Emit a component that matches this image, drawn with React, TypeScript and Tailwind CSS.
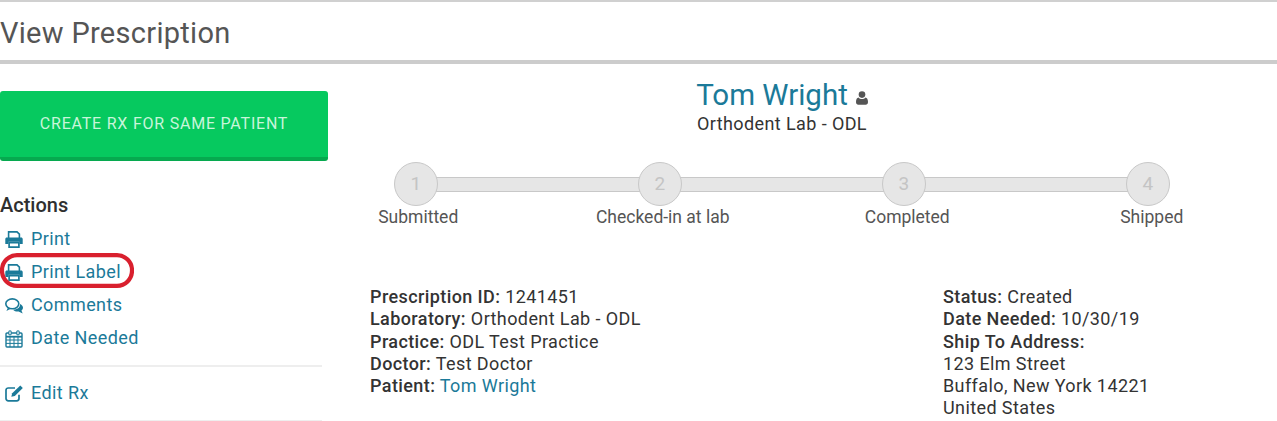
import React from 'react';

const PrintIcon = () => (
  <svg viewBox="0 0 18 17" className="h-[17px] w-[18px]" fill="none">
    <path d="M3.600 8V.9h8.400L14.400 3.200V8" stroke="currentColor" strokeWidth="1.600" />
    <path d="M1.800 6.600h14.400c.8 0 1.500.7 1.500 1.500v5h-3.200v-2.300H3.500v2.300H.3v-5c0-.8.7-1.500 1.500-1.500z" fill="currentColor" />
    <path d="M4.100 11.600h9.800v4.500H4.100z" stroke="currentColor" strokeWidth="1.700" />
  </svg>
);

const CommentsIcon = () => (
  <svg viewBox="0 0 18 16" className="h-[16px] w-[18px]" fill="none">
    <ellipse cx="7.300" cy="5.800" rx="6.500" ry="4.900" stroke="currentColor" strokeWidth="1.600" />
    <path d="M3 9.500 1.400 13 6.200 10.600z" fill="currentColor" />
    <path d="M15 6c2 .9 3 2.300 3 3.800 0 1.100-.6 2.100-1.600 2.800l1.300 2.900-4.100-2c-2.100.2-4.300-.4-5.600-1.800 3.800.1 7.400-2 7-5.700z" fill="currentColor" />
  </svg>
);

const CalendarIcon = () => (
  <svg viewBox="0 0 18 18" className="h-[18px] w-[18px]" fill="none" stroke="currentColor">
    <rect x="1" y="3" width="16" height="14" rx="1" strokeWidth="1.400" />
    <path d="M1 6.700h16" strokeWidth="1.800" />
    <path d="M1 10h16M1 13.400h16M5 6.700V17M9 6.700V17M13 6.700V17" strokeWidth="1" />
    <rect x="3.800" y="0.700" width="2.400" height="4.300" rx="1.200" fill="white" strokeWidth="1.100" />
    <rect x="11.800" y="0.700" width="2.400" height="4.300" rx="1.200" fill="white" strokeWidth="1.100" />
  </svg>
);

const EditIcon = () => (
  <svg viewBox="0 0 18 17" className="h-[17px] w-[18px]" fill="none">
    <path d="M14 9.800v3.700c0 1.300-1 2.300-2.300 2.300H3.300C2 15.800 1 14.800 1 13.500V5.300C1 4 2 3 3.300 3H10" stroke="currentColor" strokeWidth="1.700" />
    <path d="M15.300.4l2.500 2.500-8 8-3.500.9.900-3.500z" fill="currentColor" />
  </svg>
);

const UserIcon = () => (
  <svg viewBox="0 0 12 14" className="h-[14px] w-[12px]" fill="currentColor">
    <circle cx="6" cy="3.600" r="3.300" />
    <path d="M2.500 6.400C3.400 7.400 4.600 8 6 8s2.600-.6 3.500-1.600c1.500.2 2.500 1.800 2.500 4.500 0 1.700-1 2.800-2.400 2.800H2.400C1 13.700 0 12.600 0 10.900 0 8.200 1 6.600 2.500 6.400z" />
  </svg>
);

const steps = [
  { n: 1, label: 'Submitted' },
  { n: 2, label: 'Checked-in at lab' },
  { n: 3, label: 'Completed' },
  { n: 4, label: 'Shipped' },
];

const ActionLink = ({ icon, label }: { icon: React.ReactNode; label: string }) => (
  <a className="flex h-[33px] items-center text-[#1b7a99]">
    <span className="ml-[5px] flex w-[26px] shrink-0 items-center">{icon}</span>
    <span>{label}</span>
  </a>
);

export default function App() {
  return (
    <div className="h-[421px] w-[1277px] overflow-hidden bg-white font-['Roboto',sans-serif] text-[18px] leading-[22.3px] tracking-[0.4px] text-[#333]">
      <div className="flex h-[64px] items-center border-t-2 border-b-4 border-t-[#d0d0d0] border-b-[#cccccc] pt-[4px]">
        <h1 className="text-[29px] font-normal tracking-[0.3px] text-[#555]">View Prescription</h1>
      </div>

      <div className="flex">
        <aside className="w-[328px] shrink-0">
          <button className="mt-[27px] block h-[70px] w-[328px] rounded-[3px] border-b-[4px] border-[#06a94f] bg-[#06c95f] text-[16px] tracking-[0.78px] text-[#c8f5da]">
            CREATE RX FOR SAME PATIENT
          </button>
          <h2 className="mt-[33px] text-[20px] font-medium leading-[22px] tracking-normal text-[#2f2f2f]">Actions</h2>
          <div className="relative mt-[7px] w-[322px]">
            <ActionLink icon={<PrintIcon />} label="Print" />
            <ActionLink icon={<PrintIcon />} label="Print Label" />
            <ActionLink icon={<CommentsIcon />} label="Comments" />
            <ActionLink icon={<CalendarIcon />} label="Date Needed" />
            <svg viewBox="0 0 134 35" className="absolute left-0 top-[30px] h-[35px] w-[134px]" fill="none">
              <rect x="2" y="2.200" width="130" height="30.600" rx="15" stroke="#d9202e" strokeWidth="4.200" />
            </svg>
            <div className="mt-[10px] border-t-2 border-[#eeeeee] pt-[10px]">
              <ActionLink icon={<EditIcon />} label="Edit Rx" />
            </div>
            <div className="mt-[10px] border-t-2 border-[#eeeeee]" />
          </div>
        </aside>

        <main className="flex-1">
          <div className="mt-[13px] flex flex-col items-center pr-[41px]">
            <div className="flex items-baseline gap-[8px] text-[29.500px] leading-[36px] tracking-normal text-[#1b7a99]">
              Tom Wright
              <span className="text-[#555]"><UserIcon /></span>
            </div>
            <div>Orthodent Lab - ODL</div>
          </div>

          <div className="mt-[27px] flex flex-col">
            <div className="ml-[66px] flex w-[776px] items-center">
              {steps.map((s, i) => (
                <React.Fragment key={s.n}>
                  <div className="z-10 flex h-[44px] w-[44px] shrink-0 items-center justify-center rounded-full border border-[#c8c8c8] bg-[#e6e6e6] text-[19px] text-[#c4c4c4]">
                    {s.n}
                  </div>
                  {i < steps.length - 1 && <div className="-mx-[3px] h-[15px] flex-1 border-y border-[#c8c8c8] bg-[#e6e6e6]" />}
                </React.Fragment>
              ))}
            </div>
            <div className="-ml-[32px] grid w-[978px] grid-cols-4 text-center text-[17.500px] tracking-normal text-[#555]">
              {steps.map((s) => (
                <span key={s.n}>{s.label}</span>
              ))}
            </div>
          </div>

          <div className="ml-[42px] mt-[57.350px] flex">
            <div className="w-[573px]">
              <div><b className="font-medium">Prescription ID:</b> 1241451</div>
              <div><b className="font-medium">Laboratory:</b> Orthodent Lab - ODL</div>
              <div><b className="font-medium">Practice:</b> ODL Test Practice</div>
              <div><b className="font-medium">Doctor:</b> Test Doctor</div>
              <div><b className="font-medium">Patient:</b> <a className="text-[#1b7a99]">Tom Wright</a></div>
            </div>
            <div>
              <div><b className="font-medium">Status:</b> Created</div>
              <div><b className="font-medium">Date Needed:</b> 10/30/19</div>
              <div><b className="font-medium">Ship To Address:</b></div>
              <div>123 Elm Street</div>
              <div>Buffalo, New York 14221</div>
              <div>United States</div>
            </div>
          </div>
        </main>
      </div>
    </div>
  );
}
